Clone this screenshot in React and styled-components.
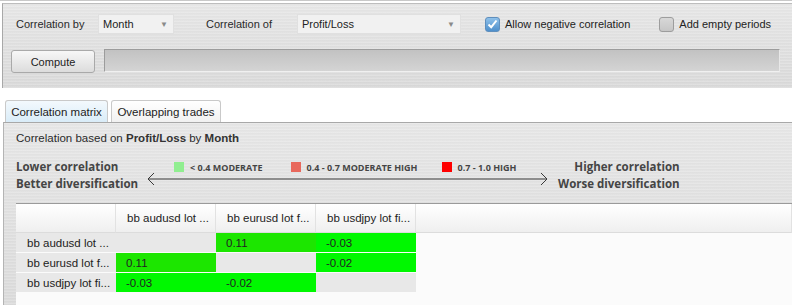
import styled, { createGlobalStyle } from 'styled-components'

const Global = createGlobalStyle`
  html, body { margin: 0; padding: 0; background: #fff; }
  body { font-family: "Liberation Sans", Arial, sans-serif; font-size: 11px; color: #222; }
`

const brushed = `
  background-color: #dedede;
  background-image:
    repeating-linear-gradient(0deg, rgba(255,255,255,0.18) 0px, rgba(255,255,255,0.18) 1px, rgba(0,0,0,0.02) 2px, rgba(0,0,0,0) 3px),
    linear-gradient(180deg, #e6e6e6, #d9d9d9);
`

const Page = styled.div`
  width: 792px;
  height: 305px;
  overflow: hidden;
  padding-top: 2px;
  border-top: 1px solid #c8c8c8;
  box-sizing: border-box;
`

const Toolbar = styled.div`
  ${brushed}
  margin-left: 2px;
  height: 85px;
  border-left: 1px solid #a8a8a8;
  border-top: 1px solid #bdbdbd;
  box-sizing: border-box;
  padding: 10px 0 0 5px;
  display: flex;
  flex-direction: column;
  gap: 14px;
  white-space: nowrap;
`

const Row = styled.div`
  display: flex;
  align-items: center;
`

const Label = styled.span`
  margin-left: ${p => p.$ml || 0}px;
  width: ${p => p.$w}px;
  color: #2a2a2a;
`

const Select = styled.div`
  width: ${p => p.$w}px;
  height: 20px;
  background: #f1f1f1;
  border: 1px solid #e0e0e0;
  box-sizing: border-box;
  display: flex;
  align-items: center;
  justify-content: space-between;
  padding: 0 5px 0 4px;
  color: #222;
  &::after {
    content: '▼';
    font-size: 8px;
    color: #8a8a8a;
  }
`

const Check = styled.span`
  width: 15px;
  height: 15px;
  box-sizing: border-box;
  border-radius: 3px;
  border: 1px solid ${p => (p.$on ? '#5f8fbd' : '#9d9d9d')};
  background: ${p => (p.$on ? 'linear-gradient(180deg, #8fc1ea, #4e8fcb)' : 'linear-gradient(180deg, #d8d8d8, #c6c6c6)')};
  display: inline-flex;
  align-items: center;
  justify-content: center;
  margin-left: ${p => p.$ml}px;
  margin-right: 5px;
`

const CheckText = styled.span`
  color: #222;
`

const Button = styled.div`
  width: 84px;
  height: 23px;
  margin-left: 3px;
  margin-top: 2px;
  box-sizing: border-box;
  border: 1px solid #a9a9a9;
  border-radius: 3px;
  background: linear-gradient(180deg, #f7f7f7, #dcdcdc);
  display: flex;
  align-items: center;
  justify-content: center;
  color: #222;
`

const Progress = styled.div`
  flex: 1;
  height: 23px;
  margin: 0 12px 0 9px;
  box-sizing: border-box;
  border: 1px solid #9c9c9c;
  border-bottom-color: #f0f0f0;
  border-right-color: #e8e8e8;
  background: linear-gradient(180deg, #c2c2c2, #d4d4d4);
`

const Tabs = styled.div`
  display: flex;
  gap: 3px;
  padding-left: 5px;
  margin-top: 12px;
  height: 22px;
  align-items: flex-end;
`

const Tab = styled.div`
  height: 22px;
  width: ${p => p.$w}px;
  box-sizing: border-box;
  border: 1px solid #c9c9c9;
  border-bottom: none;
  border-radius: 3px 3px 0 0;
  background: ${p => (p.$active ? 'linear-gradient(180deg, #f3f9fd, #d9ecf8)' : 'linear-gradient(180deg, #ffffff, #f1f1f1)')};
  display: flex;
  align-items: center;
  justify-content: center;
  color: #222;
  font-size: 11.5px;
`

const Panel = styled.div`
  ${brushed}
  margin-left: 3px;
  border-top: 1px solid #a8a8a8;
  border-left: 1px solid #b4b4b4;
  height: 200px;
  padding: 9px 0 0 12px;
  box-sizing: border-box;
`

const Caption = styled.div`
  color: #2a2a2a;
  font-size: 11.5px;
  b { color: #333; }
`

const Legend = styled.div`
  display: flex;
  align-items: center;
  margin-top: 14px;
  height: 34px;
  font-family: "Open Sans", "DejaVu Sans", sans-serif;
  color: #454545;
`

const SideText = styled.div`
  font-weight: 700;
  font-size: 11.5px;
  line-height: 17px;
  text-align: ${p => p.$right ? 'right' : 'left'};
  white-space: nowrap;
`

const Middle = styled.div`
  position: relative;
  width: 402px;
  height: 34px;
  margin: 0 9px 0 9px;
`

const Keys = styled.div`
  display: flex;
  align-items: center;
  padding-left: 27px;
  height: 16px;
  margin-top: 1px;
`

const Key = styled.div`
  display: flex;
  align-items: center;
  margin-right: ${p => p.$mr}px;
  font-size: 9px;
  font-weight: 700;
  white-space: nowrap;
  &::before {
    content: '';
    width: 10px;
    height: 10px;
    background: ${p => p.$color};
    margin-right: 6px;
  }
`

const Arrow = styled.svg`
  position: absolute;
  left: 0;
  top: 14px;
`

const TableWrap = styled.div`
  margin-top: 11px;
  background: #fbfbfb;
  border-top: 1px solid #9a9a9a;
  height: 120px;
`

const Grid = styled.div`
  display: grid;
  grid-template-columns: 100px 100px 100px 100px 1fr;
  grid-auto-rows: 20px;
  grid-template-rows: 29px;
`

const Head = styled.div`
  height: 29px;
  box-sizing: border-box;
  background: linear-gradient(180deg, #ffffff, #efefef);
  border-right: 1px solid #e2e2e2;
  border-bottom: 1px solid #dcdcdc;
  display: flex;
  align-items: center;
  padding-left: 11px;
  color: #222;
  white-space: nowrap;
  font-size: 11.5px;
`

const Cell = styled.div`
  height: 20px;
  box-sizing: border-box;
  border-bottom: 1px solid #fbfbfb;
  background: ${p => p.$bg};
  display: flex;
  align-items: center;
  padding-left: ${p => p.$pl || 10}px;
  color: #222;
  white-space: nowrap;
  font-size: 11.5px;
`

const names = ['bb audusd lot ...', 'bb eurusd lot f...', 'bb usdjpy lot fi...']
const data = [
  [null, '0.11', '-0.03'],
  ['0.11', null, '-0.02'],
  ['-0.03', '-0.02', null],
]

const colorOf = v => {
  if (v === null) return '#e8e8e8'
  if (v === '0.11') return '#1ce600'
  return '#00f800'
}

function App() {
  return (
    <Page>
      <Global />
      <Toolbar>
        <Row>
          <Label $ml={8} $w={82}>Correlation by</Label>
          <Select $w={76}>Month</Select>
          <Label $ml={32} $w={91}>Correlation of</Label>
          <Select $w={164}>Profit/Loss</Select>
          <Check $on $ml={24}>
            <svg width="11" height="10" viewBox="0 0 11 10">
              <path d="M1.5 5.5 L4.2 8.2 L9.5 1.5" fill="none" stroke="#fff" strokeWidth="2" />
            </svg>
          </Check>
          <CheckText>Allow negative correlation</CheckText>
          <Check $ml={29} />
          <CheckText>Add empty periods</CheckText>
        </Row>
        <Row>
          <Button>Compute</Button>
          <Progress />
        </Row>
      </Toolbar>
      <Tabs>
        <Tab $active $w={103}>Correlation matrix</Tab>
        <Tab $w={110}>Overlapping trades</Tab>
      </Tabs>
      <Panel>
        <Caption>Correlation based on <b>Profit/Loss</b> by <b>Month</b></Caption>
        <Legend>
          <SideText>Lower correlation<br />Better diversification</SideText>
          <Middle>
            <Keys>
              <Key $color="#90ee90" $mr={28}>&lt; 0.4 MODERATE</Key>
              <Key $color="#e8685c" $mr={24}>0.4 - 0.7 MODERATE HIGH</Key>
              <Key $color="#ff0000" $mr={0}>0.7 - 1.0 HIGH</Key>
            </Keys>
            <Arrow width="402" height="14" viewBox="0 0 402 14">
              <line x1="1" y1="7" x2="400" y2="7" stroke="#3a3a3a" strokeWidth="1" />
              <path d="M7 1 L1 7 L7 13" fill="none" stroke="#3a3a3a" strokeWidth="1" />
              <path d="M394 1 L400 7 L394 13" fill="none" stroke="#3a3a3a" strokeWidth="1" />
            </Arrow>
          </Middle>
          <SideText $right>Higher correlation<br />Worse diversification</SideText>
        </Legend>
        <TableWrap>
          <Grid>
            <Head />
            {names.map(h => <Head key={h}>{h}</Head>)}
            <Head />
            {data.flatMap((row, i) => [
              <Cell key={'n' + i} $bg="#e8e8e8" $pl={11}>{names[i]}</Cell>,
              ...row.map((v, j) => (
                <Cell key={i + '-' + j} $bg={colorOf(v)}>{v}</Cell>
              )),
              <div key={'f' + i} />,
            ])}
          </Grid>
        </TableWrap>
      </Panel>
    </Page>
  )
}

export default App
